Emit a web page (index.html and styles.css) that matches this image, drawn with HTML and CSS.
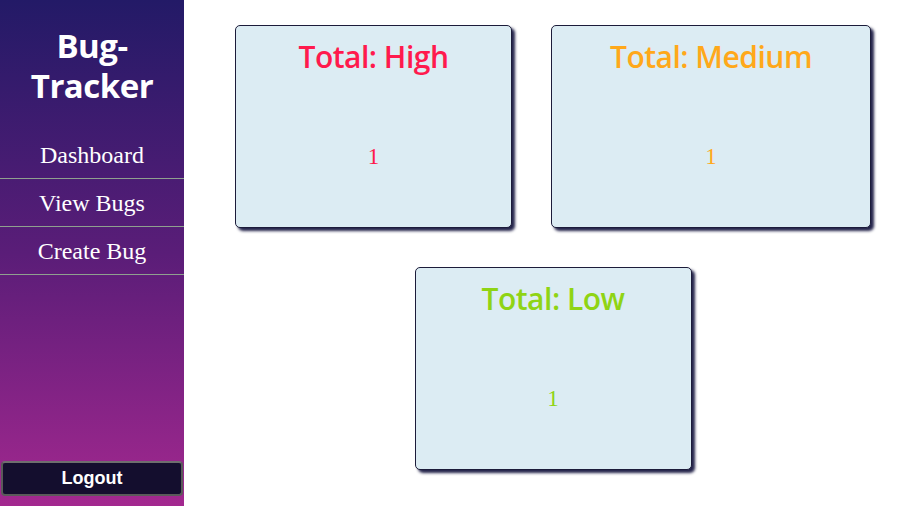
FILE: index.html
```html
<!DOCTYPE html>
<html lang="en">
  <head>
    <meta charset="UTF-8" />
    <meta name="viewport" content="width=device-width, initial-scale=1.0" />
    <title>Bug-Tracker</title>
    <link rel="stylesheet" href="styles.css">
  </head>
  <body>
    <div class="app">
      <aside class="sidebar">
        <h1 class="brand">Bug-<br />Tracker</h1>
        <nav class="nav">
          <a class="nav-link" href="#">Dashboard</a>
          <a class="nav-link" href="#">View Bugs</a>
          <a class="nav-link" href="#">Create Bug</a>
        </nav>
        <button class="logout">Logout</button>
      </aside>

      <main class="dashboard">
        <div class="card high">
          <h2 class="card-title">Total: High</h2>
          <div class="card-count">1</div>
        </div>
        <div class="card medium">
          <h2 class="card-title">Total: Medium</h2>
          <div class="card-count">1</div>
        </div>
        <div class="card low">
          <h2 class="card-title">Total: Low</h2>
          <div class="card-count">1</div>
        </div>
      </main>
    </div>
  </body>
</html>
```

FILE: styles.css
```css
* {
  margin: 0;
  padding: 0;
  box-sizing: border-box;
}

body {
  height: 100vh;
  overflow: hidden;
  background: #fff;
  font-family: "Liberation Serif", serif;
}

.app {
  display: flex;
  height: 100%;
}

/* Sidebar */
.sidebar {
  width: 184px;
  flex-shrink: 0;
  display: flex;
  flex-direction: column;
  background: linear-gradient(180deg, #231a67 0%, #5a1d78 50%, #a3288f 100%);
  color: #fff;
}

.brand {
  font-family: "Open Sans", sans-serif;
  font-size: 33px;
  font-weight: 700;
  line-height: 40px;
  letter-spacing: -0.5px;
  text-align: center;
  padding-top: 26px;
  margin-bottom: 25px;
}

.nav {
  display: flex;
  flex-direction: column;
}

.nav-link {
  display: block;
  height: 48px;
  line-height: 48px;
  text-align: center;
  color: #fff;
  text-decoration: none;
  font-size: 24px;
  border-bottom: 1px solid #8fa08f;
}

.logout {
  margin: auto 1px 10px;
  height: 35px;
  background: #140e2e;
  color: #fff;
  border: 2px solid #5a5a5a;
  border-top-color: #6e6e6e;
  border-radius: 4px;
  font-family: "Liberation Sans", sans-serif;
  font-size: 18px;
  font-weight: 700;
}

/* Cards */
.dashboard {
  flex: 1;
  display: flex;
  flex-wrap: wrap;
  justify-content: center;
  align-content: flex-start;
  gap: 39px 39px;
  padding: 25px 0 0 1px;
}

.card {
  min-width: 277px;
  height: 203px;
  padding: 0 58px;
  background: #dcecf3;
  border: 1px solid #1c1c3a;
  border-radius: 5px;
  box-shadow: 3px 3px 3px #23234a;
  text-align: center;
}

.card-title {
  font-family: "Open Sans", sans-serif;
  font-size: 30px;
  font-weight: 600;
  letter-spacing: -0.5px;
  line-height: 40px;
  margin-top: 11px;
  white-space: nowrap;
}

.card-count {
  font-size: 23px;
  margin-top: 67px;
}

.high {
  color: #ff1a4d;
}

.medium {
  color: #ffa81a;
}

.low {
  color: #8fd414;
}
```
